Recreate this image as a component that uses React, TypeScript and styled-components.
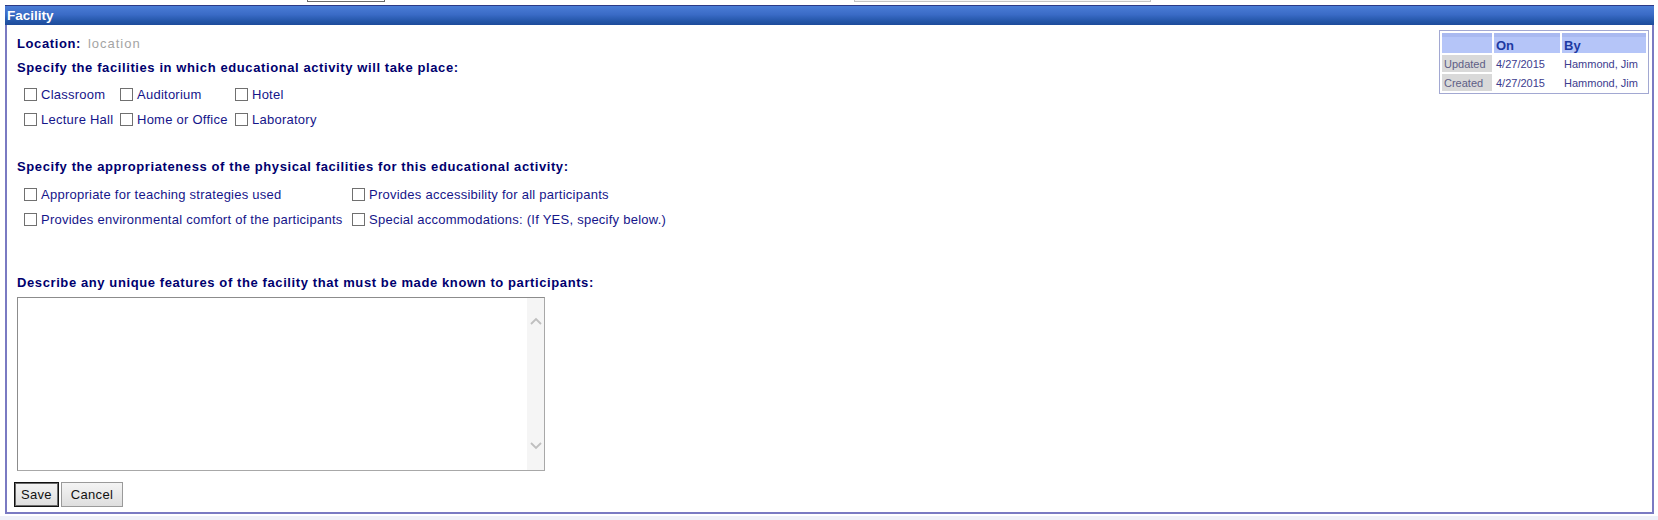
import React from 'react';
import styled, { createGlobalStyle } from 'styled-components';

const GlobalStyle = createGlobalStyle`
  html, body {
    margin: 0;
    padding: 0;
    background: #ffffff;
  }
  body {
    font-family: Tahoma, "Liberation Sans", Arial, sans-serif;
    font-size: 12px;
    color: #000080;
  }
`;

// Page
const Page = styled.div`
  width: 1658px;
  height: 520px;
  overflow: hidden;
  background: linear-gradient(#ffffff 0, #ffffff 516px, #eef0f8 516px);
`;

// Leftovers of the form above (only their bottom edges show)
const TopStrip = styled.div`
  height: 5px;
  display: flex;
  align-items: flex-start;
`;

const CutInput = styled.div<{ left: number; width: number; light?: boolean }>`
  margin-left: ${p => p.left}px;
  width: ${p => p.width}px;
  height: 2px;
  box-sizing: border-box;
  border: 1px solid ${p => (p.light ? '#c4c4c4' : '#6a6a6a')};
  border-top: none;
  background: ${p => (p.light ? '#f4f4f4' : '#ffffff')};
`;

// Panel
const Panel = styled.div`
  margin-left: 5px;
  width: 1649px;
`;

const PanelHeader = styled.div`
  height: 19px;
  border-top: 1px solid #2c3a86;
  background: linear-gradient(#4b7dd6 0%, #3a6bc6 45%, #2456a8 80%, #1d4b9b 100%);
  color: #ffffff;
  font-family: Tahoma, "Liberation Sans", Arial, sans-serif;
  font-weight: bold;
  font-size: 13.5px;
  line-height: 19px;
  padding-left: 2px;
`;

const PanelBody = styled.div`
  border: 2px solid #7a7ac2;
  border-top: none;
  display: flex;
  align-items: flex-start;
  height: 489px;
  box-sizing: border-box;
`;

const Main = styled.div`
  flex: 1;
  padding: 11px 0 0 10px;
`;

const Line = styled.div<{ gapTop?: number }>`
  height: 16px;
  line-height: 16px;
  margin-top: ${p => p.gapTop ?? 0}px;
  white-space: nowrap;
`;

const Label = styled.span`
  font-weight: bold;
  font-size: 13px;
  color: #00006e;
  letter-spacing: 0.6px;
`;

const Placeholder = styled.span`
  margin-left: 7px;
  font-size: 13px;
  color: #a4a4a4;
  letter-spacing: 1px;
`;

const CheckGrid = styled.div<{ columns: string; gapTop: number }>`
  display: grid;
  grid-template-columns: ${p => p.columns};
  grid-auto-rows: 25px;
  margin-top: ${p => p.gapTop}px;
  padding-left: 7px;
`;

const CheckItem = styled.label`
  display: flex;
  align-items: center;
  white-space: nowrap;
  font-size: 13px;
  color: #15158a;
  letter-spacing: 0.25px;
`;

const Box = styled.input`
  appearance: none;
  margin: 0 4px 0 0;
  width: 13px;
  height: 13px;
  box-sizing: border-box;
  border: 1px solid #707070;
  background: #ffffff;
  flex: none;
`;

const TextAreaFrame = styled.div`
  margin-top: 6px;
  width: 528px;
  height: 174px;
  box-sizing: border-box;
  border: 1px solid #8c8c8c;
  border-right-color: #a8a8a8;
  border-bottom-color: #a8a8a8;
  display: flex;
  background: #ffffff;
`;

const TextArea = styled.textarea`
  flex: 1;
  border: none;
  outline: none;
  resize: none;
  padding: 2px;
  font-family: "Liberation Sans", Arial, sans-serif;
  font-size: 13px;
`;

const ScrollTrack = styled.div`
  width: 17px;
  background: #f5f5f5;
  display: flex;
  flex-direction: column;
  justify-content: space-between;
  align-items: center;
  padding: 19px 0 20px;
`;

const ButtonRow = styled.div`
  display: flex;
  gap: 2px;
  margin: 11px 0 0 -3px;
`;

const Button = styled.button<{ primary?: boolean }>`
  height: 25px;
  padding: 0 ${p => (p.primary ? 6 : 9)}px;
  box-sizing: border-box;
  border: 1px solid ${p => (p.primary ? '#111111' : '#9a9a9a')};
  box-shadow: ${p => (p.primary ? 'inset 0 0 0 1px #6c6c6c' : 'none')};
  background: linear-gradient(#f4f4f4, #dedede);
  font-family: "Liberation Sans", Arial, sans-serif;
  font-size: 13px;
  letter-spacing: 0.3px;
  color: #111111;
  border-radius: 0;
`;

// Audit table at the top right
const Meta = styled.table`
  margin: 5px 3px 0 0;
  border: 1px solid #a2a8d2;
  border-spacing: 2px;
  font-family: Tahoma, "Liberation Sans", Arial, sans-serif;
  font-size: 11px;
`;

const MetaHead = styled.th<{ w: number }>`
  width: ${p => p.w}px;
  height: 20px;
  box-sizing: border-box;
  padding: 0 2px;
  border-top: 4px solid #a9b9f0;
  background: #b5c5f8;
  text-align: left;
  color: #1d3aa2;
  font-size: 13px;
  font-weight: bold;
`;

const MetaKey = styled.td`
  height: 17px;
  padding: 0 2px;
  background: #d9d9d9;
  color: #5e5e86;
`;

const MetaCell = styled.td`
  height: 17px;
  padding: 0 2px;
  color: #3c3c8e;
  white-space: nowrap;
`;

const Chevron: React.FC<{ up?: boolean }> = ({ up }) => (
  <svg width="12" height="8" viewBox="0 0 12 8">
    <path
      d={up ? 'M1 7 L6 2 L11 7' : 'M1 1 L6 6 L11 1'}
      fill="none"
      stroke="#bfbfbf"
      strokeWidth="1.8"
    />
  </svg>
);

const facilities = ['Classroom', 'Auditorium', 'Hotel', 'Lecture Hall', 'Home or Office', 'Laboratory'];

const appropriateness = [
  'Appropriate for teaching strategies used',
  'Provides accessibility for all participants',
  'Provides environmental comfort of the participants',
  'Special accommodations: (If YES, specify below.)',
];

const audit = [
  { action: 'Updated', on: '4/27/2015', by: 'Hammond, Jim' },
  { action: 'Created', on: '4/27/2015', by: 'Hammond, Jim' },
];

const App: React.FC = () => {
  return (
    <Page>
      <GlobalStyle />
      <TopStrip>
        <CutInput left={307} width={78} />
        <CutInput left={469} width={297} light />
      </TopStrip>

      <Panel>
        <PanelHeader>Facility</PanelHeader>
        <PanelBody>
          <Main>
            <Line>
              <Label>Location:</Label>
              <Placeholder>location</Placeholder>
            </Line>
            <Line gapTop={8}>
              <Label>Specify the facilities in which educational activity will take place:</Label>
            </Line>

            <CheckGrid columns="96px 115px auto" gapTop={6}>
              {facilities.map(name => (
                <CheckItem key={name}>
                  <Box type="checkbox" />
                  {name}
                </CheckItem>
              ))}
            </CheckGrid>

            <Line gapTop={27}>
              <Label>Specify the appropriateness of the physical facilities for this educational activity:</Label>
            </Line>

            <CheckGrid columns="328px auto" gapTop={7}>
              {appropriateness.map(name => (
                <CheckItem key={name}>
                  <Box type="checkbox" />
                  {name}
                </CheckItem>
              ))}
            </CheckGrid>

            <Line gapTop={43}>
              <Label>Describe any unique features of the facility that must be made known to participants:</Label>
            </Line>

            <TextAreaFrame>
              <TextArea />
              <ScrollTrack>
                <Chevron up />
                <Chevron />
              </ScrollTrack>
            </TextAreaFrame>

            <ButtonRow>
              <Button primary>Save</Button>
              <Button>Cancel</Button>
            </ButtonRow>
          </Main>

          <Meta>
            <thead>
              <tr>
                <MetaHead w={50}></MetaHead>
                <MetaHead w={66}>On</MetaHead>
                <MetaHead w={84}>By</MetaHead>
              </tr>
            </thead>
            <tbody>
              {audit.map(row => (
                <tr key={row.action}>
                  <MetaKey>{row.action}</MetaKey>
                  <MetaCell>{row.on}</MetaCell>
                  <MetaCell>{row.by}</MetaCell>
                </tr>
              ))}
            </tbody>
          </Meta>
        </PanelBody>
      </Panel>
    </Page>
  );
};

export default App;
